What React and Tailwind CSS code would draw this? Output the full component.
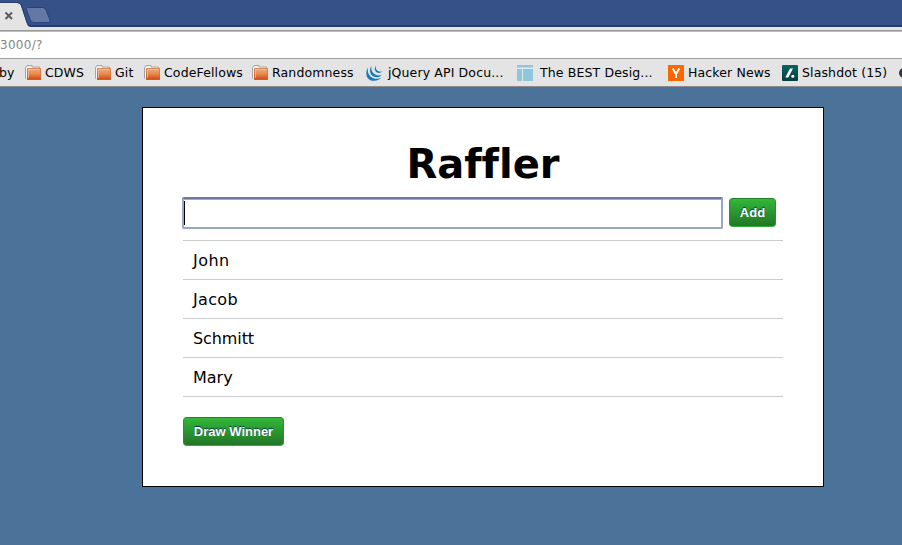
import React from 'react';

function Folder() {
  return (
    <svg width="17" height="16" viewBox="0 0 17 16" className="shrink-0">
      <defs>
        <linearGradient id="folderFill" x1="0" y1="0" x2="0" y2="1">
          <stop offset="0" stopColor="#edb184" />
          <stop offset=".5" stopColor="#e58a4e" />
          <stop offset="1" stopColor="#d2410c" />
        </linearGradient>
      </defs>
      <path d="M.5 13.5V2.500Q.5 1.500 1.500 1.500h.5v-1h5v1.500h7.500V4" fill="#f3f3f3" stroke="#a5a5a5" />
      <rect x="2" y="3" width="14" height="12" rx=".5" fill="url(#folderFill)" />
      <path d="M2.500 14.500V3.500h13v11z" fill="none" stroke="#cf6a35" strokeOpacity=".6" />
      <path d="M3.500 13V4.500h11" fill="none" stroke="#f5cdb0" strokeOpacity=".6" />
    </svg>
  );
}

function JQuery() {
  return (
    <svg width="17" height="16" viewBox="0 0 17 16" fill="#1779bb" className="shrink-0">
      <path d="M2 2.500C-1.500 8 .5 16 8 15.800c3.500 0 6-1.300 7.500-3.500-2.500 1.700-5.500 2-8 .9C3 11.500 1 7.500 2 2.500z" />
      <path d="M5.500.8C2.500 5 4 12 10.500 12.200c2.300 0 4-.8 5.300-2.500-2.200 1-4.300 1-6.200.1C6.300 8.300 4.800 4.800 5.500.8z" />
      <path d="M9.700.2C7.500 4 9.500 8 13 8c1.300 0 2.300-.5 3-1.700-1.400.5-2.500.4-3.500 0C10.200 5.300 9.200 3 9.700.2z" />
    </svg>
  );
}

function Layout() {
  return (
    <svg width="16" height="16" viewBox="0 0 16 16" shapeRendering="crispEdges" className="shrink-0">
      <path d="M0 0h16v2H0zM0 4h5v12H0zM6 4h10v12H6z" fill="#90c6da" />
      <path d="M0 2h16v2H0zM5 4h1v12H5z" fill="#d9edf3" />
      <path d="M0 2h16v1H0z" fill="#b5dbe7" />
    </svg>
  );
}

function HackerNews() {
  return (
    <svg width="16" height="16" viewBox="0 0 16 16" className="shrink-0">
      <path d="M0 0h16v16H0z" fill="#ff6600" />
      <path d="M4.700 3.500 8 9l3.300-5.500M8 8.500V13" fill="none" stroke="#fff" strokeWidth="2" />
    </svg>
  );
}

function Slashdot() {
  return (
    <svg width="16" height="16" viewBox="0 0 16 16" className="shrink-0">
      <defs>
        <linearGradient id="slashFill" x1="0" y1="0" x2="0" y2="1">
          <stop offset="0" stopColor="#086565" />
          <stop offset="1" stopColor="#083d3d" />
        </linearGradient>
      </defs>
      <rect width="16" height="16" rx="1" fill="url(#slashFill)" />
      <path d="M8 3.500h3L6.300 12.500h-3z" fill="#fff" />
      <circle cx="10.800" cy="11.200" r="1.500" fill="#fff" />
    </svg>
  );
}

const bookmarks = [
  { label: 'CDWS', Icon: Folder, width: 'w-[70px]', gap: 'gap-[3px]' },
  { label: 'Git', Icon: Folder, width: 'w-[49px]', gap: 'gap-[3px]' },
  { label: 'CodeFellows', Icon: Folder, width: 'w-[108px]', gap: 'gap-[3px]' },
  { label: 'Randomness', Icon: Folder, width: 'w-[114px]', gap: 'gap-[3px]' },
  { label: 'jQuery API Docu...', Icon: JQuery, width: 'w-[151px]', gap: 'gap-[5px]' },
  { label: 'The BEST Desig...', Icon: Layout, width: 'w-[151px]', gap: 'gap-[7px]' },
  { label: 'Hacker News', Icon: HackerNews, width: 'w-[114px]', gap: 'gap-1' },
  { label: 'Slashdot (15)', Icon: Slashdot, width: 'w-[117px]', gap: 'gap-1' },
];

const entrants = [
  { name: 'John', tracking: 'tracking-[0.45px]' },
  { name: 'Jacob', tracking: 'tracking-[0.35px]' },
  { name: 'Schmitt', tracking: 'tracking-[-0.1px]' },
  { name: 'Mary', tracking: 'tracking-normal' },
];

function Browser() {
  return (
    <header className="h-[87px]">
      <div className="h-[27px] border-b-2 border-[#253c70] bg-[#365088]" />
      <div className="relative h-[5px] border-b border-[#bdbdbd] bg-[#e4e4e4]">
        <div className="h-[4px] border-b border-[#999]" />
        <svg width="60" height="30" viewBox="0 0 60 30" className="absolute -top-[27px] left-0">
          <path d="M0 3h17q3 0 4 3l6 18q1 3 4 3v3H0z" fill="#e4e4e4" />
          <path d="M0 2.500h17q3.500 0 4.500 3l5.500 17q1 3.500 4 3.500" fill="none" stroke="#263d70" />
          <path d="M28 7.500h15q2 0 3 2.500l4 10q.5 2.500-1.500 2.500H34q-2.500 0-3.500-2.500L26.500 10Q25.500 7.500 28 7.500z" fill="#6478a5" stroke="#2a4279" />
          <path d="m5.500 12.500 6.500 6.500m0-6.500L5.500 19" stroke="#5c5c5c" strokeWidth="2" />
        </svg>
      </div>
      <div className="flex h-[26px] items-center bg-white text-[12px] leading-[26px] tracking-[0.3px] text-[#858585]">3000/?</div>
      <div className="flex h-[29px] items-center overflow-hidden border-y border-t-[#a0a0a0] border-b-[#8b8b8b] bg-[#e4e4e4] text-[12.500px] tracking-[0.13px] whitespace-nowrap text-black">
        <span className="-ml-px mr-px w-[25px] shrink-0 pt-0.5">by</span>
        {bookmarks.map(({ label, Icon, width, gap }) => (
          <div key={label} className={`flex shrink-0 items-center ${width} ${gap}`}>
            <Icon />
            <span className="pt-0.5">{label}</span>
          </div>
        ))}
        <span className="size-[10px] shrink-0 rounded-full bg-[#38343d]" />
      </div>
    </header>
  );
}

function Button({ children, className }) {
  return (
    <button
      className={`h-[29px] shrink-0 rounded-[4px] border border-x-[#299030] border-t-[#238329] border-b-[#2fae36] bg-linear-to-b from-[#32b838] to-[#227627] font-['Liberation_Sans',sans-serif] text-[13px] font-bold text-white [text-shadow:0_-1px_1px_#003355] ${className}`}
    >
      {children}
    </button>
  );
}

export default function App() {
  return (
    <div className="h-[545px] w-[902px] overflow-hidden bg-[#4b7399] font-['DejaVu_Sans',sans-serif]">
      <Browser />
      <main className="mt-5 ml-[142px] h-[380px] w-[682px] border border-black bg-white px-10 pt-8 text-black">
        <h1 className="text-center text-[40px] leading-[48px] font-bold [font-variant-ligatures:none]">Raffler</h1>
        <div className="mt-[9px] -ml-px flex gap-[6px]">
          <div className="flex h-[32px] w-[541px] items-center rounded-[2px] border-2 border-[#98a7c9] border-t-[#7079a0] bg-white shadow-[inset_0_1px_0_#aaa]">
            <span className="h-[24px] w-px bg-black" />
          </div>
          <Button className="mt-px w-[47px]">Add</Button>
        </div>
        <ul className="mt-[11px] border-t border-[#ccc]">
          {entrants.map(({ name, tracking }) => (
            <li key={name} className={`h-[39px] border-b border-[#ccc] pl-[10px] text-[16px] leading-[40px] ${tracking}`}>
              {name}
            </li>
          ))}
        </ul>
        <Button className="mt-5 block w-[101px]">Draw Winner</Button>
      </main>
    </div>
  );
}
